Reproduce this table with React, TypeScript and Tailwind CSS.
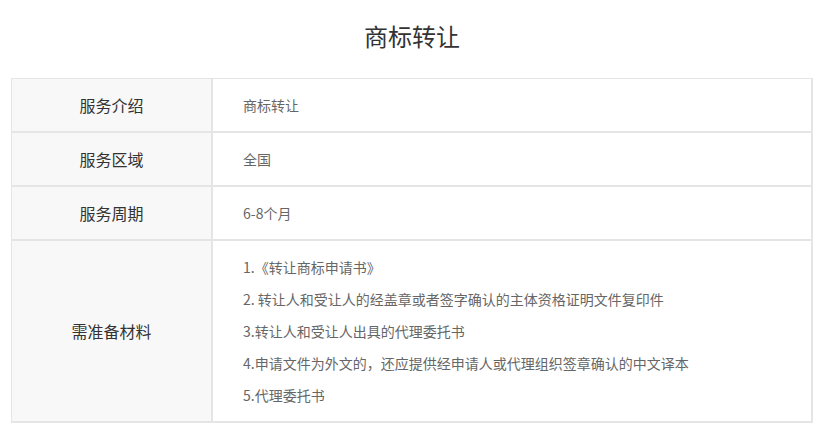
import React from "react";

const rows: { label: string; value: string }[] = [
  { label: "服务介绍", value: "商标转让" },
  { label: "服务区域", value: "全国" },
  { label: "服务周期", value: "6-8个月" },
];

const materials = [
  "1.《转让商标申请书》",
  "2. 转让人和受让人的经盖章或者签字确认的主体资格证明文件复印件",
  "3.转让人和受让人出具的代理委托书",
  "4.申请文件为外文的，还应提供经申请人或代理组织签章确认的中文译本",
  "5.代理委托书",
];

export default function App() {
  return (
    <div
      className="w-[824px] h-[442px] bg-white overflow-hidden"
      style={{ fontFamily: '"Microsoft YaHei", "Noto Sans CJK SC", "Noto Sans", sans-serif' }}
    >
      <div className="pt-[24px] h-[78px] text-center text-[24px] leading-[24px] text-[#333]">
        商标转让
      </div>
      <div className="ml-[11px] w-[802px] border-t border-l border-[#e5e5e5]">
        {rows.map((r) => (
          <div key={r.label} className="flex h-[54px]">
            <div className="w-[201px] bg-[#f8f8f8] border-r-2 border-b-2 border-[#e5e5e5] flex items-center justify-center text-[16px] text-[#333]">
              {r.label}
            </div>
            <div className="flex-1 border-r-2 border-b-2 border-[#e5e5e5] flex items-center pl-[30px] text-[14px] text-[#666]">
              {r.value}
            </div>
          </div>
        ))}
        <div className="flex h-[182px]">
          <div className="w-[201px] bg-[#f8f8f8] border-r-2 border-b-2 border-[#e5e5e5] flex items-center justify-center text-[16px] text-[#333]">
            需准备材料
          </div>
          <div className="flex-1 border-r-2 border-b-2 border-[#e5e5e5] flex flex-col justify-center pl-[30px] text-[14px] text-[#666]">
            {materials.map((m) => (
              <div key={m} className="leading-[32px]">
                {m}
              </div>
            ))}
          </div>
        </div>
      </div>
    </div>
  );
}
